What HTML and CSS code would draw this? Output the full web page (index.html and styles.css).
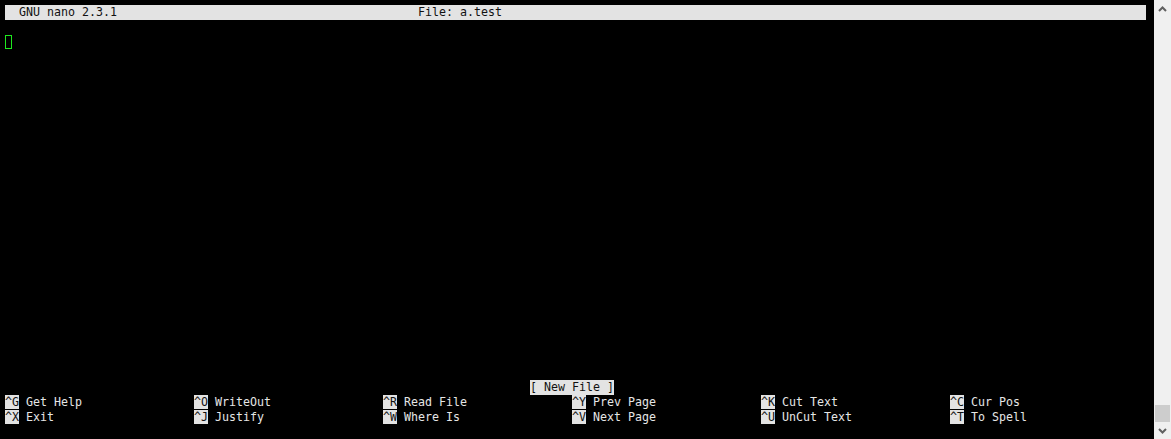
FILE: index.html
```html
<!DOCTYPE html>
<html>
<head>
<meta charset="utf-8">
<link rel="stylesheet" href="styles.css">
</head>
<body>
<div class="window">
  <div class="term">
    <div class="row titlebar"><span class="title-left">  GNU nano 2.3.1</span><span class="title-file">File: a.test</span></div>
    <div class="row"></div>
    <div class="row"><span class="cursor"></span></div>
    <div class="editor"></div>
    <div class="row status"><span class="status-msg">[ New File ]</span></div>
    <div class="shortcuts">
      <div class="sc"><span class="key">^G</span> Get Help</div>
      <div class="sc"><span class="key">^O</span> WriteOut</div>
      <div class="sc"><span class="key">^R</span> Read File</div>
      <div class="sc"><span class="key">^Y</span> Prev Page</div>
      <div class="sc"><span class="key">^K</span> Cut Text</div>
      <div class="sc"><span class="key">^C</span> Cur Pos</div>
      <div class="sc"><span class="key">^X</span> Exit</div>
      <div class="sc"><span class="key">^J</span> Justify</div>
      <div class="sc"><span class="key">^W</span> Where Is</div>
      <div class="sc"><span class="key">^V</span> Next Page</div>
      <div class="sc"><span class="key">^U</span> UnCut Text</div>
      <div class="sc"><span class="key">^T</span> To Spell</div>
    </div>
  </div>
  <div class="scrollbar">
    <div class="sb-btn">
      <svg width="9" height="6" viewBox="0 0 9 6"><path d="M1 5 L4.5 1.5 L8 5" fill="none" stroke="#606060" stroke-width="2"/></svg>
    </div>
    <div class="sb-track"><div class="sb-thumb"></div></div>
    <div class="sb-btn">
      <svg width="9" height="6" viewBox="0 0 9 6"><path d="M1 1 L4.5 4.5 L8 1" fill="none" stroke="#606060" stroke-width="2"/></svg>
    </div>
  </div>
</div>
</body>
</html>
```
FILE: styles.css
```css
html, body {
  margin: 0;
  padding: 0;
  background: #000;
}
.window {
  display: flex;
  width: 1171px;
  height: 439px;
  background: #000;
}
.term {
  width: 1154px;
  height: 439px;
  box-sizing: border-box;
  padding: 5px 0 14px 5px;
  display: flex;
  flex-direction: column;
  font-family: "DejaVu Sans Mono", "Liberation Mono", monospace;
  font-size: 11.63px;
  line-height: 15px;
  color: #e6e6e6;
  white-space: pre;
}
.row {
  height: 15px;
  display: flex;
}
.titlebar {
  width: 1141px;
  background: #e3e3e3;
  color: #111;
}
.title-left {
  width: 413px;
}
.cursor {
  width: 7px;
  height: 14px;
  box-sizing: border-box;
  border: 1px solid #1ee81e;
}
.editor {
  flex: 1;
}
.status {
  padding-left: 525px;
}
.status-msg {
  background: #e3e3e3;
  color: #111;
}
.shortcuts {
  display: grid;
  grid-template-columns: repeat(6, 189px);
  grid-auto-rows: 15px;
}
.sc {
  height: 15px;
}
.key {
  background: #e3e3e3;
  color: #111;
}
.scrollbar {
  width: 17px;
  height: 439px;
  background: #f0f0f0;
  display: flex;
  flex-direction: column;
}
.sb-btn {
  height: 17px;
  display: flex;
  align-items: center;
  justify-content: center;
}
.sb-track {
  flex: 1;
  display: flex;
  flex-direction: column;
  justify-content: flex-end;
}
.sb-thumb {
  height: 17px;
  margin: 0 1px 0 1px;
  background: #cdcdcd;
}
```
